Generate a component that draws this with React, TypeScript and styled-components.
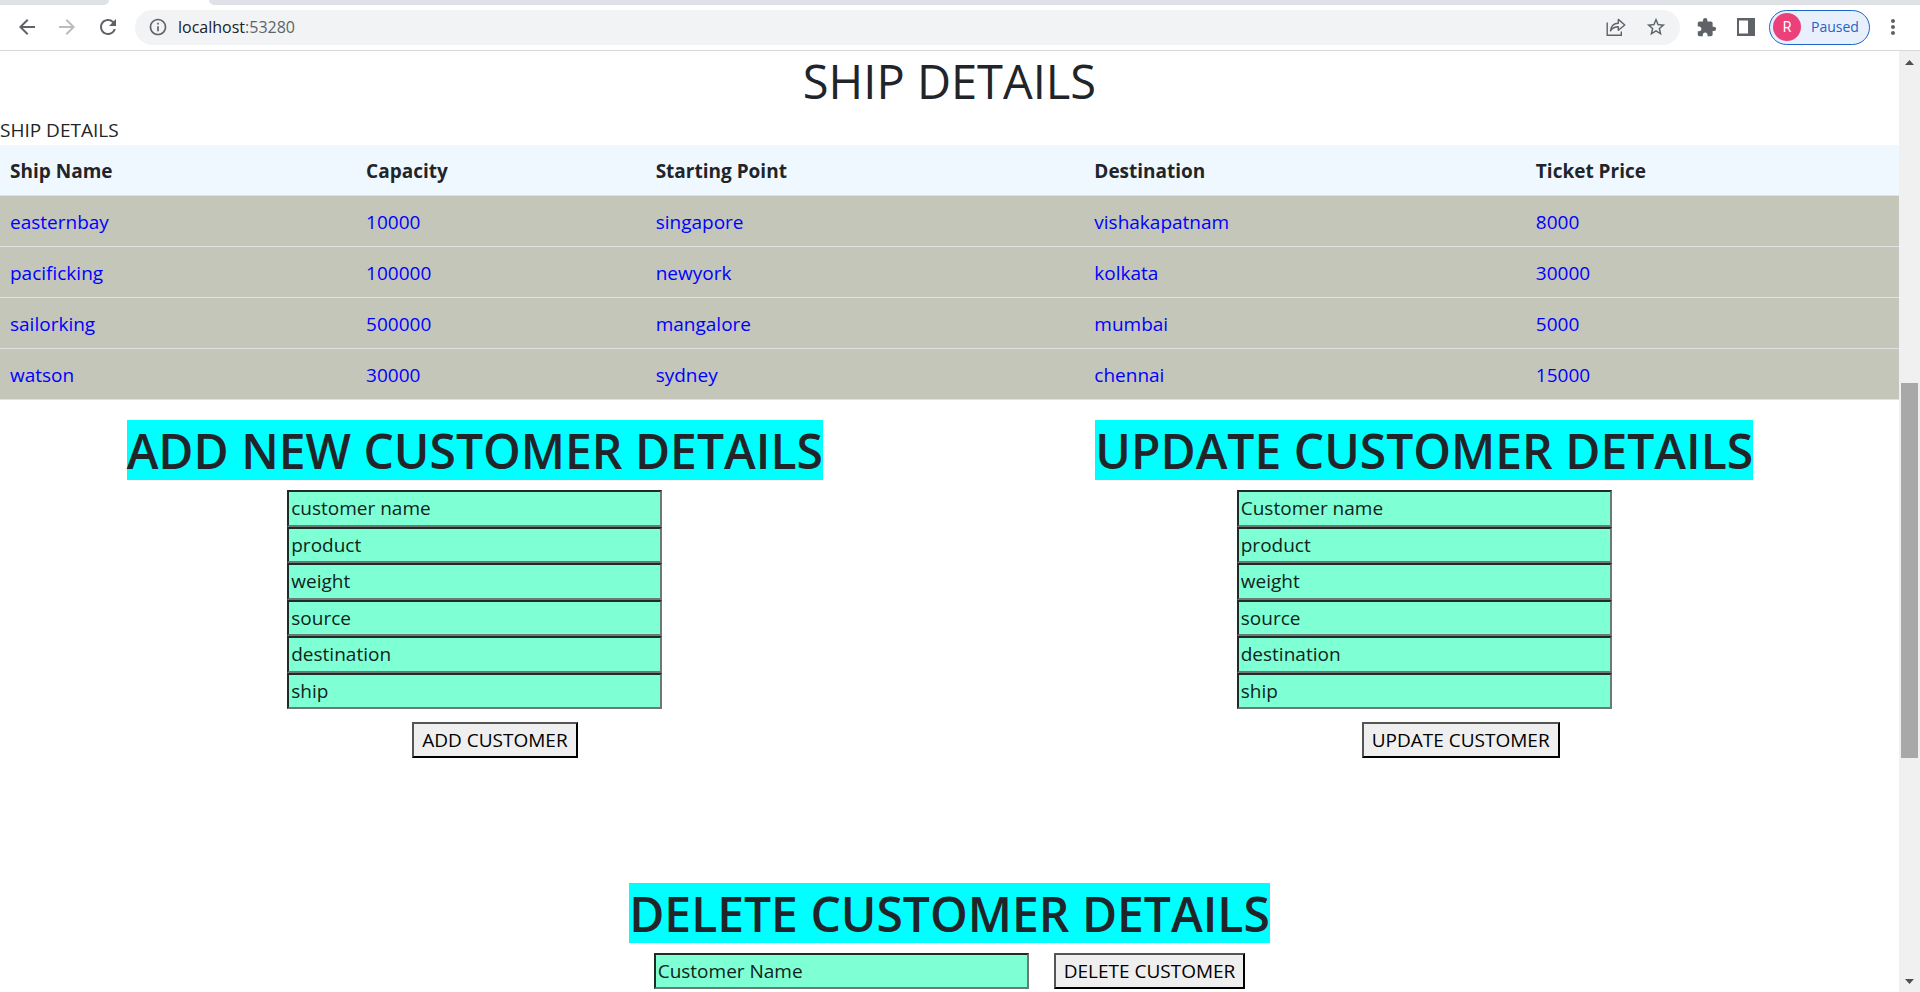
import React from 'react';
import styled, { createGlobalStyle } from 'styled-components';
import {
  MdArrowBack,
  MdArrowForward,
  MdExtension,
  MdInfoOutline,
  MdMoreVert,
  MdRefresh,
  MdStarBorder,
} from 'react-icons/md';

const GlobalStyle = createGlobalStyle`
  *, *::before, *::after { box-sizing: border-box; }
  body {
    margin: 0;
    overflow: hidden;
    background: #fff;
    color: #212529;
    font-family: "Segoe UI", "Open Sans", "Noto Sans", sans-serif;
    font-size: 19px;
    line-height: 30px;
  }
  input, button { font: inherit; }
`;

const Browser = styled.div`
  display: flex;
  flex-direction: column;
  height: 100vh;
`;

const TabStrip = styled.div`
  flex: none;
  display: flex;
  height: 5px;
`;

const InactiveTabs = styled.div<{ $side: 'left' | 'right' }>`
  background: #dee1e6;
  ${(p) =>
    p.$side === 'left'
      ? 'width: 109px; border-bottom-right-radius: 8px;'
      : 'flex: 1; margin-left: 100px; border-bottom-left-radius: 8px;'}
`;

const Toolbar = styled.header`
  flex: none;
  display: flex;
  align-items: center;
  height: 46px;
  padding: 0 15px 1px;
  border-bottom: 1px solid #d5d7da;
  background: #fff;
`;

const IconButton = styled.button<{ $size?: number; $gap?: number; $faded?: boolean }>`
  flex: none;
  display: flex;
  padding: 0;
  margin-left: ${(p) => p.$gap ?? 0}px;
  border: 0;
  background: none;
  color: ${(p) => (p.$faded ? '#babcbe' : '#5f6368')};
  svg {
    width: ${(p) => p.$size ?? 24}px;
    height: ${(p) => p.$size ?? 24}px;
  }
`;

const AddressBar = styled.div`
  flex: 1;
  display: flex;
  align-items: center;
  height: 35px;
  margin-left: 15px;
  padding: 0 13px;
  border-radius: 18px;
  background: #f1f3f4;
`;

const Url = styled.span`
  flex: 1;
  margin-left: 10px;
  font-size: 16px;
  color: #5f6368;
  b { font-weight: 400; color: #202124; }
`;

const Profile = styled.button`
  flex: none;
  display: flex;
  align-items: center;
  height: 35px;
  width: 101px;
  margin: 0 11px 0 14px;
  padding: 0 3px;
  gap: 10px;
  border: 1px solid #1b66c9;
  border-radius: 18px;
  background: #e8f0fe;
  color: #2a62c4;
  font-size: 14px;
`;

const Avatar = styled.span`
  width: 28px;
  height: 28px;
  border-radius: 50%;
  background: #ec407a;
  color: #fff;
  font-family: Roboto, sans-serif;
  line-height: 28px;
  text-align: center;
`;

const Viewport = styled.div`
  flex: 1;
  min-height: 0;
  display: flex;
`;

const Page = styled.main`
  flex: 1;
  min-width: 0;
  overflow: hidden;
`;

const PageTitle = styled.h1`
  margin: 0 0 4px;
  font-size: 47px;
  font-weight: 400;
  line-height: 60px;
  text-align: center;
`;

const Table = styled.table`
  width: 100%;
  margin-bottom: 20px;
  table-layout: fixed;
  border-collapse: collapse;
  caption { text-align: left; }
  th, td {
    padding: 11px 10px 9px;
    border-bottom: 1px solid #dee2e6;
    text-align: left;
  }
  th { background: #f0f8ff; font-weight: 700; }
  td { background: #c3c6b9; color: #0000ff; }
`;

const Column = styled.col<{ $share?: number }>`
  width: ${(p) => (p.$share ? `${p.$share}%` : 'auto')};
`;

const Forms = styled.div`
  display: grid;
  grid-template-columns: 1fr 1fr;
  margin-bottom: 125px;
`;

const Form = styled.form`
  display: flex;
  flex-direction: column;
  align-items: center;
`;

const FormTitle = styled.h2`
  margin: 0 0 10px;
  padding-top: 2px;
  background: #00ffff;
  font-size: 48px;
  font-weight: 600;
  line-height: 58px;
  white-space: nowrap;
`;

const Fields = styled.div`
  display: grid;
  grid-auto-rows: 1fr;
  width: 375px;
  height: 219px;
`;

const Field = styled.input`
  width: 375px;
  height: 100%;
  min-height: 36px;
  padding: 0 2px;
  border: 2px solid;
  border-color: #1f2a2a #6b7a75 #6b7a75 #1f2a2a;
  border-radius: 0;
  background: #7fffd4;
  color: #10231c;
  &::placeholder { color: #10231c; opacity: 1; }
`;

const Actions = styled.div`
  display: flex;
  width: 375px;
  margin-top: 13px;
  padding-left: 125px;
`;

const Submit = styled.button`
  height: 36px;
  padding: 0 8px;
  border: 2px solid;
  border-color: #555 #000 #000 #555;
  background: #efefef;
  color: #000;
  line-height: 32px;
  white-space: nowrap;
`;

const InlineFields = styled.div`
  display: flex;
  gap: 25px;
`;

const ScrollTrack = styled.div`
  flex: none;
  display: flex;
  flex-direction: column;
  align-items: center;
  width: 21px;
  padding: 9px 0 8px;
  background: #f0f0f0;
`;

const ScrollSpace = styled.div<{ $grow: number }>`
  flex: ${(p) => p.$grow} 0 0;
`;

const ScrollThumb = styled.div`
  flex: 375 0 0;
  width: 17px;
  background: #a8a8a8;
`;

const ShareIcon = () => (
  <svg viewBox="0 0 20 20" fill="none" stroke="currentColor" strokeWidth="1.4">
    <path d="M1.2 5.5V18.3H15.3V14.5" />
    <path d="M4.5 13.8C5 9 8 6.3 12.3 6.2V2.4L18.8 8L12.3 13.3V9.8C9 9.8 6.5 10.8 4.5 13.8Z" strokeLinejoin="round" />
  </svg>
);

const SidePanelIcon = () => (
  <svg viewBox="0 0 18 18">
    <path fill="currentColor" fillRule="evenodd" d="M0 0H18V18H0ZM2 2.5V15.5H11V2.5Z" />
  </svg>
);

const ScrollArrow = ({ down }: { down?: boolean }) => (
  <svg width="9" height="5" viewBox="0 0 9 5" aria-hidden="true">
    <path fill="#505050" d={down ? 'M0 0H9L4.5 5Z' : 'M0 5H9L4.5 0Z'} />
  </svg>
);

const ships = [
  ['easternbay', '10000', 'singapore', 'vishakapatnam', '8000'],
  ['pacificking', '100000', 'newyork', 'kolkata', '30000'],
  ['sailorking', '500000', 'mangalore', 'mumbai', '5000'],
  ['watson', '30000', 'sydney', 'chennai', '15000'],
];

const headings = ['Ship Name', 'Capacity', 'Starting Point', 'Destination', 'Ticket Price'];
const shares = [18.75, 15.25, 23.1, 23.25, undefined];

function CustomerForm({ title, fields, action }: { title: string; fields: string[]; action: string }) {
  return (
    <Form onSubmit={(e) => e.preventDefault()}>
      <FormTitle>{title}</FormTitle>
      <Fields>
        {fields.map((f) => (
          <Field key={f} type="text" placeholder={f} aria-label={f} />
        ))}
      </Fields>
      <Actions>
        <Submit>{action}</Submit>
      </Actions>
    </Form>
  );
}

export default function App() {
  return (
    <Browser>
      <GlobalStyle />
      <TabStrip>
        <InactiveTabs $side="left" />
        <InactiveTabs $side="right" />
      </TabStrip>
      <Toolbar>
        <IconButton aria-label="Back"><MdArrowBack /></IconButton>
        <IconButton aria-label="Forward" $gap={16} $faded><MdArrowForward /></IconButton>
        <IconButton aria-label="Reload" $gap={17}><MdRefresh /></IconButton>
        <AddressBar>
          <IconButton aria-label="Site information" $size={20}><MdInfoOutline /></IconButton>
          <Url><b>localhost</b>:53280</Url>
          <IconButton aria-label="Share" $size={20}><ShareIcon /></IconButton>
          <IconButton aria-label="Bookmark" $size={22} $gap={19}><MdStarBorder /></IconButton>
        </AddressBar>
        <IconButton aria-label="Extensions" $size={21} $gap={16}><MdExtension /></IconButton>
        <IconButton aria-label="Side panel" $size={18} $gap={20}><SidePanelIcon /></IconButton>
        <Profile><Avatar>R</Avatar>Paused</Profile>
        <IconButton aria-label="Menu"><MdMoreVert /></IconButton>
      </Toolbar>
      <Viewport>
        <Page>
          <PageTitle>SHIP DETAILS</PageTitle>
          <Table>
            <caption>SHIP DETAILS</caption>
            <colgroup>
              {shares.map((s, i) => <Column key={i} $share={s} />)}
            </colgroup>
            <thead>
              <tr>{headings.map((h) => <th key={h} scope="col">{h}</th>)}</tr>
            </thead>
            <tbody>
              {ships.map((row) => (
                <tr key={row[0]}>{row.map((cell, i) => <td key={i}>{cell}</td>)}</tr>
              ))}
            </tbody>
          </Table>
          <Forms>
            <CustomerForm
              title="ADD NEW CUSTOMER DETAILS"
              fields={['customer name', 'product', 'weight', 'source', 'destination', 'ship']}
              action="ADD CUSTOMER"
            />
            <CustomerForm
              title="UPDATE CUSTOMER DETAILS"
              fields={['Customer name', 'product', 'weight', 'source', 'destination', 'ship']}
              action="UPDATE CUSTOMER"
            />
          </Forms>
          <Form onSubmit={(e) => e.preventDefault()}>
            <FormTitle>DELETE CUSTOMER DETAILS</FormTitle>
            <InlineFields>
              <Field type="text" placeholder="Customer Name" aria-label="Customer Name" />
              <Submit>DELETE CUSTOMER</Submit>
            </InlineFields>
          </Form>
        </Page>
        <ScrollTrack aria-hidden="true">
          <ScrollArrow />
          <ScrollSpace $grow={318} />
          <ScrollThumb />
          <ScrollSpace $grow={221} />
          <ScrollArrow down />
        </ScrollTrack>
      </Viewport>
    </Browser>
  );
}
